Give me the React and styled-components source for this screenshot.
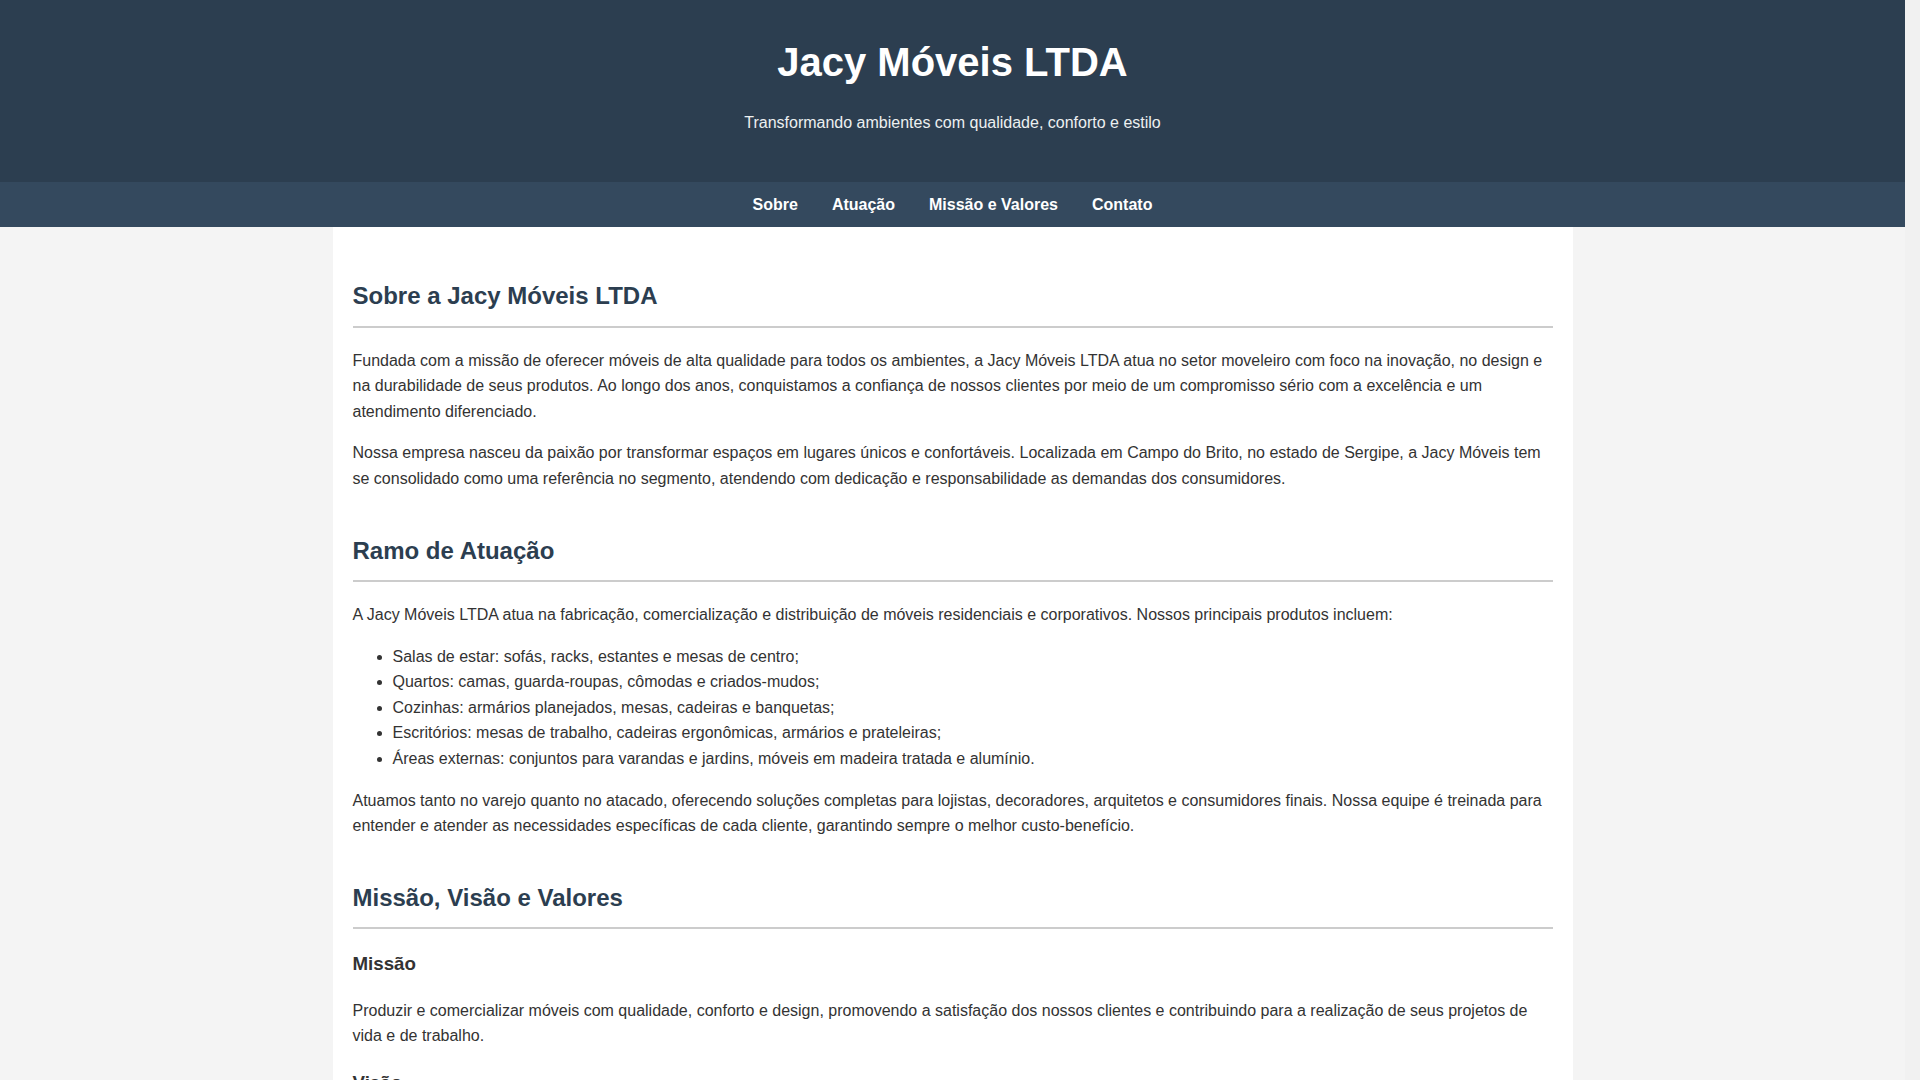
import React from 'react';
import styled, { createGlobalStyle } from 'styled-components';

const GlobalStyle = createGlobalStyle`
  * {
    box-sizing: border-box;
  }
  html {
    overflow-y: scroll;
    background: #f1f1f1;
  }
  body {
    margin: 0;
    margin-right: 15px;
    background: #f4f4f4;
    color: #333;
    font-family: "Liberation Sans", Arial, sans-serif;
    font-size: 16px;
    line-height: 1.6;
  }
`;

const Header = styled.header`
  background: #2c3e50;
  color: #fff;
  text-align: center;
  padding: 30px 20px;
`;

const Title = styled.h1`
  margin: 0;
  font-size: 40px;
  font-weight: bold;
`;

const Tagline = styled.p`
  margin: 16px 0;
  color: #ecf0f1;
`;

const Nav = styled.nav`
  background: #34495e;
  padding: 10px 0;
`;

const NavList = styled.ul`
  list-style: none;
  margin: 0;
  padding: 0;
  display: flex;
  justify-content: center;
  gap: 34px;
`;

const NavLink = styled.a`
  color: #fff;
  font-weight: bold;
  text-decoration: none;
`;

const Main = styled.main`
  max-width: 1240px;
  margin: 0 auto;
  background: #fff;
  padding: 30px 20px;
`;

const Section = styled.section`
  margin-bottom: 40px;
`;

const SectionTitle = styled.h2`
  color: #2c3e50;
  font-size: 24px;
  margin: 20px 0;
  padding-bottom: 10px;
  border-bottom: 2px solid #ccc;
`;

const SubTitle = styled.h3`
  font-size: 1.17em;
  margin: 18.72px 0;
  color: #333;
`;

const Text = styled.p`
  margin: 16px 0;
`;

const List = styled.ul`
  margin: 16px 0;
  padding-left: 40px;
`;

const Footer = styled.footer`
  background: #2c3e50;
  color: #ecf0f1;
  text-align: center;
  padding: 20px;
  font-size: 14px;
`;

const navItems = [
  { id: 'sobre', label: 'Sobre' },
  { id: 'atuacao', label: 'Atuação' },
  { id: 'missao', label: 'Missão e Valores' },
  { id: 'contato', label: 'Contato' }
];

const produtos = [
  'Salas de estar: sofás, racks, estantes e mesas de centro;',
  'Quartos: camas, guarda-roupas, cômodas e criados-mudos;',
  'Cozinhas: armários planejados, mesas, cadeiras e banquetas;',
  'Escritórios: mesas de trabalho, cadeiras ergonômicas, armários e prateleiras;',
  'Áreas externas: conjuntos para varandas e jardins, móveis em madeira tratada e alumínio.'
];

const valores = [
  'Qualidade em cada detalhe;',
  'Respeito e transparência com clientes e parceiros;',
  'Compromisso com prazos e resultados;',
  'Inovação e criatividade;',
  'Responsabilidade social e ambiental.'
];

const App = () => (
  <>
    <GlobalStyle />
    <Header>
      <Title>Jacy Móveis LTDA</Title>
      <Tagline>Transformando ambientes com qualidade, conforto e estilo</Tagline>
    </Header>
    <Nav>
      <NavList>
        {navItems.map(item => (
          <li key={item.id}>
            <NavLink href={`#${item.id}`}>{item.label}</NavLink>
          </li>
        ))}
      </NavList>
    </Nav>
    <Main>
      <Section id="sobre">
        <SectionTitle>Sobre a Jacy Móveis LTDA</SectionTitle>
        <Text>
          Fundada com a missão de oferecer móveis de alta qualidade para todos os ambientes, a Jacy Móveis LTDA atua no setor moveleiro com foco na inovação, no design e na durabilidade de seus produtos. Ao longo dos anos, conquistamos a confiança de nossos clientes por meio de um compromisso sério com a excelência e um atendimento diferenciado.
        </Text>
        <Text>
          Nossa empresa nasceu da paixão por transformar espaços em lugares únicos e confortáveis. Localizada em Campo do Brito, no estado de Sergipe, a Jacy Móveis tem se consolidado como uma referência no segmento, atendendo com dedicação e responsabilidade as demandas dos consumidores.
        </Text>
      </Section>

      <Section id="atuacao">
        <SectionTitle>Ramo de Atuação</SectionTitle>
        <Text>
          A Jacy Móveis LTDA atua na fabricação, comercialização e distribuição de móveis residenciais e corporativos. Nossos principais produtos incluem:
        </Text>
        <List>
          {produtos.map(p => <li key={p}>{p}</li>)}
        </List>
        <Text>
          Atuamos tanto no varejo quanto no atacado, oferecendo soluções completas para lojistas, decoradores, arquitetos e consumidores finais. Nossa equipe é treinada para entender e atender as necessidades específicas de cada cliente, garantindo sempre o melhor custo-benefício.
        </Text>
      </Section>

      <Section id="missao">
        <SectionTitle>Missão, Visão e Valores</SectionTitle>
        <SubTitle>Missão</SubTitle>
        <Text>
          Produzir e comercializar móveis com qualidade, conforto e design, promovendo a satisfação dos nossos clientes e contribuindo para a realização de seus projetos de vida e de trabalho.
        </Text>
        <SubTitle>Visão</SubTitle>
        <Text>
          Ser reconhecida como uma das principais empresas do setor moveleiro em Sergipe, destacando-se pela excelência dos produtos e pelo atendimento personalizado.
        </Text>
        <SubTitle>Valores</SubTitle>
        <List>
          {valores.map(v => <li key={v}>{v}</li>)}
        </List>
      </Section>

      <Section id="contato">
        <SectionTitle>Contato</SectionTitle>
        <Text>Endereço: Campo do Brito - SE</Text>
        <Text>E-mail: contato@jacymoveis.com.br</Text>
      </Section>
    </Main>
    <Footer>© Jacy Móveis LTDA. Todos os direitos reservados.</Footer>
  </>
);

export default App;
